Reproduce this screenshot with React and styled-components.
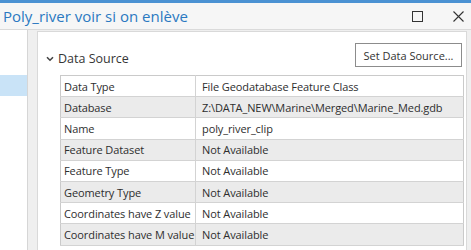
import React from 'react'
import styled, { createGlobalStyle } from 'styled-components'

const GlobalStyle = createGlobalStyle`
  html, body {
    margin: 0;
    padding: 0;
    overflow: hidden;
    background: #efefef;
  }
  * {
    box-sizing: border-box;
  }
`

const rows = [
  ['Data Type', 'File Geodatabase Feature Class'],
  ['Database', 'Z:\\DATA_NEW\\Marine\\Merged\\Marine_Med.gdb'],
  ['Name', 'poly_river_clip'],
  ['Feature Dataset', 'Not Available'],
  ['Feature Type', 'Not Available'],
  ['Geometry Type', 'Not Available'],
  ['Coordinates have Z value', 'Not Available'],
  ['Coordinates have M value', 'Not Available'],
]

export default function App() {
  return (
    <>
      <GlobalStyle />
      <Window>
        <TopStrip />
        <TitleBar>
          <Title>Poly_river voir si on enlève</Title>
          <Controls>
            <svg width="11" height="11" viewBox="0 0 11 11">
              <rect x="0.5" y="0.5" width="10" height="10" fill="none" stroke="#333" strokeWidth="1" />
            </svg>
            <svg width="11" height="11" viewBox="0 0 11 11">
              <path d="M0.5 0.5 L10.5 10.5 M10.5 0.5 L0.5 10.5" stroke="#333" strokeWidth="1.1" />
            </svg>
          </Controls>
        </TitleBar>
        <Body>
          <Sidebar>
            <SidebarItem $selected />
          </Sidebar>
          <Panel>
            <SectionHeader>
              <Heading>
                <svg width="8" height="6" viewBox="0 0 8 6">
                  <path d="M1 1.2 L4 4.2 L7 1.2" fill="none" stroke="#444" strokeWidth="1.6" />
                </svg>
                Data Source
              </Heading>
              <Button>Set Data Source...</Button>
            </SectionHeader>
            <Table>
              <tbody>
                {rows.map(([label, value], i) => (
                  <Row key={label} $alt={i % 2 === 1}>
                    <LabelCell>{label}</LabelCell>
                    <ValueCell>{value}</ValueCell>
                  </Row>
                ))}
              </tbody>
            </Table>
          </Panel>
        </Body>
      </Window>
    </>
  )
}

const Window = styled.div`
  width: 471px;
  height: 250px;
  display: flex;
  flex-direction: column;
  font-family: 'Segoe UI', 'Open Sans', sans-serif;
`

const TopStrip = styled.div`
  height: 3px;
  background: #4b92d3;
`

const TitleBar = styled.div`
  height: 27px;
  display: flex;
  align-items: center;
  justify-content: space-between;
  background: #f6f6f6;
  border-bottom: 1px solid #dadada;
  padding: 0 7px 0 3px;
`

const Title = styled.div`
  font-size: 15px;
  color: #2b79c1;
  margin-top: -1px;
`

const Controls = styled.div`
  display: flex;
  align-items: center;
  gap: 30px;
`

const Body = styled.div`
  flex: 1;
  display: flex;
  background: #efefef;
  min-height: 0;
`

const Sidebar = styled.div`
  width: 28px;
  background: #ffffff;
  border-right: 1px solid #d6d6d6;
  padding-top: 45px;
`

const SidebarItem = styled.div`
  height: 21px;
  background: ${(p) => (p.$selected ? '#c9e3f7' : 'transparent')};
`

const Panel = styled.div`
  flex: 1;
  margin: 1px 4px 0 9px;
  background: #ffffff;
  border: 1px solid #d9d9d9;
  border-bottom: none;
  padding: 11px 4px 0 8px;
  overflow: hidden;
`

const SectionHeader = styled.div`
  display: flex;
  align-items: center;
  justify-content: space-between;
  height: 24px;
`

const Heading = styled.div`
  display: flex;
  align-items: center;
  gap: 4px;
  font-size: 12.5px;
  color: #363636;
  margin-top: 6px;

  svg {
    margin-top: 1px;
  }
`

const Button = styled.div`
  width: 107px;
  height: 24px;
  display: flex;
  align-items: center;
  justify-content: center;
  border: 1px solid #8c8c8c;
  background: #ffffff;
  font-size: 11px;
  color: #333;
`

const Table = styled.table`
  margin: 8px 0 0 14px;
  width: 404px;
  table-layout: fixed;
  border-collapse: collapse;
  border: 1px solid #cacaca;
  font-size: 11px;
  letter-spacing: -0.1px;
  color: #2e2e2e;
`

const Row = styled.tr`
  height: 21.2px;
  background: ${(p) => (p.$alt ? '#ebebeb' : '#ffffff')};
  border-bottom: 1px solid #d3d3d3;
`

const LabelCell = styled.td`
  width: 135px;
  padding: 0 0 0 3px;
  border-right: 1px solid #d3d3d3;
  white-space: nowrap;
  overflow: hidden;
`

const ValueCell = styled.td`
  padding: 0 0 0 6px;
  white-space: nowrap;
  overflow: hidden;
`
